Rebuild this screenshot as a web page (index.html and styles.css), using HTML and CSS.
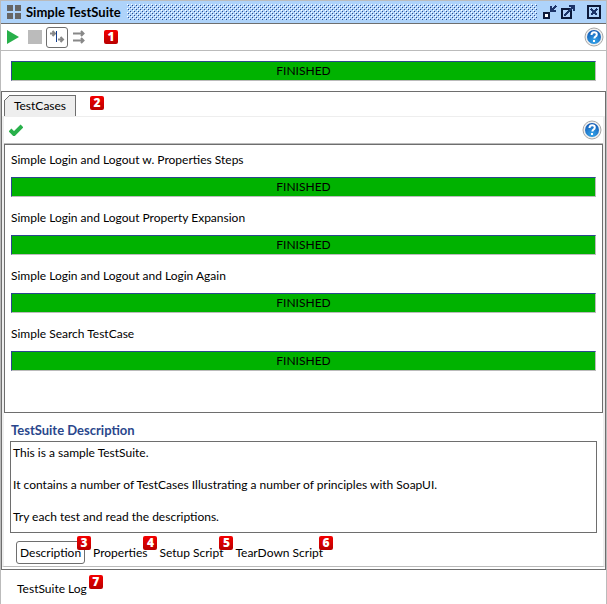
FILE: index.html
```html
<!DOCTYPE html>
<html lang="en">
<head>
    <meta charset="UTF-8" />
    <meta name="viewport" content="width=device-width, initial-scale=1" />
    <title>Simple TestSuite</title>
    <link rel="stylesheet" href="styles.css">
</head>
<body>
    <svg class="defs" width="0" height="0" aria-hidden="true">
        <defs>
            <radialGradient id="ball" cx="0.5" cy="0.8" r="0.8">
                <stop offset="0" stop-color="#35a5ea" />
                <stop offset="1" stop-color="#1259b4" />
            </radialGradient>
            <symbol id="help" viewBox="0 0 20 20">
                <circle cx="10" cy="10" r="9" fill="#f0f0f0" stroke="#a8a8a8" />
                <circle cx="10" cy="10" r="7" fill="url(#ball)" />
                <path d="M7.5 8q0-2.800 2.600-2.800 2.700 0 2.700 2.300 0 1.300-1.400 2.100-1 .6-1 1.900" fill="none" stroke="#fff" stroke-width="2" />
                <rect x="9" y="13" width="2" height="2" fill="#fff" />
            </symbol>
        </defs>
    </svg>

    <main class="window">
        <header class="titlebar">
            <svg class="grid-icon" width="14" height="14" fill="#666">
                <path d="M0 0h6v6H0zM8 0h6v6H8zM0 8h6v6H0zM8 8h6v6H8z" />
            </svg>
            <h1>Simple TestSuite</h1>
            <svg class="grip" height="16" aria-hidden="true">
                <defs>
                    <pattern id="dots" width="4" height="4" patternUnits="userSpaceOnUse">
                        <path d="M0 0h1v1H0zM2 2h1v1H2z" fill="#fff" />
                        <path d="M1 1h1v1H1zM3 3h1v1H3z" fill="#2a478c" />
                    </pattern>
                </defs>
                <rect width="100%" height="16" fill="url(#dots)" shape-rendering="crispEdges" />
            </svg>
            <div class="window-buttons">
                <button type="button" aria-label="Minimize">
                    <svg width="14" height="14" fill="none" shape-rendering="crispEdges">
                        <rect x="1" y="8" width="5" height="5" fill="#fff" stroke="#0c1a3a" stroke-width="2" />
                        <path d="M8 1v5h5M8 6l5-5" stroke="#1c3468" stroke-width="2" />
                    </svg>
                </button>
                <button type="button" aria-label="Maximize">
                    <svg width="14" height="14" fill="none" shape-rendering="crispEdges">
                        <rect x="1" y="4" width="9" height="9" fill="#b4d2fa" stroke="#0c1a3a" stroke-width="2" />
                        <path d="M3 11l10-10M8 1h5v5" stroke="#1c3468" stroke-width="2" />
                    </svg>
                </button>
                <button type="button" class="close" aria-label="Close">
                    <svg width="14" height="14" fill="none" shape-rendering="crispEdges">
                        <rect x="1" y="1" width="12" height="12" stroke="#0c1a3a" stroke-width="2" />
                        <path d="M4 4l6 6M10 4l-6 6" stroke="#1c3468" stroke-width="2" />
                    </svg>
                </button>
            </div>
        </header>

        <div class="toolbar">
            <button type="button" aria-label="Run">
                <svg width="14" height="14"><path d="M1 0l12 7-12 7z" fill="#28b04a" /></svg>
            </button>
            <button type="button" aria-label="Stop">
                <svg width="14" height="14"><rect width="14" height="14" fill="#bbb" /></svg>
            </button>
            <button type="button" class="toggle" aria-label="Sequential" aria-pressed="true">
                <svg width="16" height="14" fill="none" stroke="#888">
                    <path d="M1 3.500h5M3.500 1L6 3.500 3.500 6M9 9.500h5M11.500 7L14 9.500 11.500 12" stroke-width="2" />
                    <path d="M7.500 1v11" stroke="#123c8c" />
                </svg>
            </button>
            <button type="button" aria-label="Parallel">
                <svg width="14" height="14" fill="none" stroke="#888">
                    <path d="M1 3.500h11M9 1l2.500 2.500L9 6M1 10.500h11M9 8l2.500 2.500L9 13" stroke-width="2" />
                </svg>
            </button>
            <span class="marker">1</span>
            <button type="button" class="help" aria-label="Help"><svg width="20" height="20"><use href="#help" /></svg></button>
        </div>

        <div class="suite-progress">
            <div class="progress">FINISHED</div>
        </div>

        <section class="panel">
            <div class="tabs">
                <button type="button" class="tab">
                    <svg class="tab-corner" width="6" height="6"><path d="M0 0h6L0 6z" fill="#fff" /><path d="M0 6l6-6" stroke="#6e6e6e" /></svg>
                    TestCases
                </button>
                <span class="marker">2</span>
            </div>

            <div class="panel-body">
                <div class="toolbar case-toolbar">
                    <button type="button" aria-label="Select test cases">
                        <svg width="14" height="12" fill="none"><path d="M1 6l4 4 8-8" stroke="#28b04a" stroke-width="4" /></svg>
                    </button>
                    <button type="button" class="help" aria-label="Help"><svg width="20" height="20"><use href="#help" /></svg></button>
                </div>

                <ul class="cases">
                    <li>
                        <p>Simple Login and Logout w. Properties Steps</p>
                        <div class="progress">FINISHED</div>
                    </li>
                    <li>
                        <p>Simple Login and Logout Property Expansion</p>
                        <div class="progress">FINISHED</div>
                    </li>
                    <li>
                        <p>Simple Login and Logout and Login Again</p>
                        <div class="progress">FINISHED</div>
                    </li>
                    <li>
                        <p>Simple Search TestCase</p>
                        <div class="progress">FINISHED</div>
                    </li>
                </ul>

                <div class="description">
                    <label for="description">TestSuite Description</label>
                    <textarea id="description" rows="5">This is a sample TestSuite.

It contains a number of TestCases Illustrating a number of principles with SoapUI.

Try each test and read the descriptions.</textarea>
                </div>

                <div class="inspectors">
                    <button type="button" class="selected">Description<span class="marker">3</span></button>
                    <button type="button">Properties<span class="marker">4</span></button>
                    <button type="button">Setup Script<span class="marker">5</span></button>
                    <button type="button">TearDown Script<span class="marker">6</span></button>
                </div>
            </div>
        </section>

        <footer class="inspectors log">
            <button type="button">TestSuite Log<span class="marker">7</span></button>
        </footer>
    </main>
</body>
</html>
```

FILE: styles.css
```css
* { box-sizing: border-box; }
body { margin: 0; font-family: Lato, "Open Sans", sans-serif; font-size: 12px; line-height: 16px; color: #000; background: #fff; }
button { display: flex; align-items: center; justify-content: center; margin: 0; padding: 0; border: 0; background: none; font: inherit; color: inherit; }
svg { display: block; }
.defs { position: absolute; }

.window { display: flex; flex-direction: column; min-height: 100vh; border: 1px solid #bbb; border-bottom-width: 2px; }

.titlebar { display: flex; align-items: center; height: 23px; padding: 0 5px 0 6px; background: #aed3fa; border-bottom: 1px solid #6e6e6e; }
.titlebar h1 { margin: 0 6px 0 5px; font-size: 13px; line-height: 16px; }
.grip { flex: 1; min-width: 0; }
.window-buttons { display: flex; gap: 4px; margin-left: 6px; }
.window-buttons .close { margin-left: 8px; }

.toolbar { display: flex; align-items: center; height: 27px; padding: 0 2px 0 5px; border-bottom: 1px solid #bbb; }
.toolbar button { height: 20px; margin-right: 8px; }
.toolbar .toggle { width: 22px; height: 21px; margin: 0 4px 0 -4px; border: 1px solid #6e6e6e; border-radius: 3px; }
.toolbar .help { margin: 0 0 0 auto; }
.toolbar .marker { margin-left: 10px; }

.marker { width: 14px; height: 14px; border-radius: 2px; background: linear-gradient(#f40000, #b80000); color: #fff; font-family: "Open Sans", sans-serif; font-size: 12px; font-weight: 800; line-height: 14px; text-align: center; }

.progress { height: 20px; border: 1px solid; border-color: #2a478c #bbb #bbb #2a478c; background: #00b200; line-height: 18px; text-align: center; }
.suite-progress { padding: 10px; }

.panel { border: 1px solid #6e6e6e; }
.tabs { display: flex; align-items: flex-start; gap: 14px; padding: 3px 2px 0; }
.tab { position: relative; width: 72px; height: 21px; border: 1px solid #6e6e6e; border-bottom: 0; background: #eee; }
.tab-corner { position: absolute; top: -1px; left: -1px; }
.tabs .marker { margin-top: 1px; }

.panel-body { margin-bottom: 2px; border: solid #eee; border-width: 1px 2px; border-bottom-color: #bbb; }
.case-toolbar { padding-right: 1px; }

.cases { height: 269px; margin: 0; padding: 7px 6px; border: 1px solid #6e6e6e; list-style: none; }
.cases li { margin-bottom: 13px; }
.cases p { margin: 0 0 9px; }

.description { padding: 9px 6px 8px; }
.description label { display: block; margin: 0 1px 3px; color: #2a478c; font-size: 13px; font-weight: bold; }
.description textarea { display: block; width: 100%; height: 92px; padding: 3px 2px; border: 1px solid #6e6e6e; resize: none; overflow: hidden; font: inherit; color: inherit; }

.inspectors { display: flex; gap: 4px; padding: 0 12px 2px; }
.inspectors button { position: relative; height: 23px; padding: 0 3px; border: 1px solid transparent; border-radius: 3px; }
.inspectors .selected { border-color: #6e6e6e; }
.inspectors .marker { position: absolute; top: -6px; right: -7px; }
.log { padding: 7px 12px; }
.log .marker { top: -3px; right: -13px; }
```
